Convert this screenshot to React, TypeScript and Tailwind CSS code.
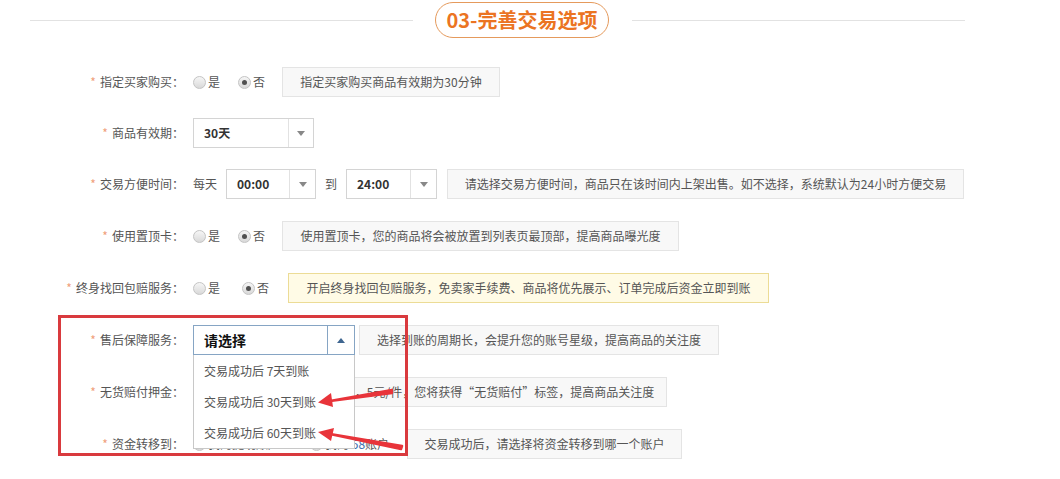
import type { ReactNode } from "react"

// ── small building blocks ─────────────────────────────────────────────────────
function Label({ text }: { text: string }) {
  return (
    <div className="w-[184px] shrink-0 text-right text-[12px] text-[#555]">
      <span className="mr-[4px] text-[#f0a07c]">*</span>
      {text}：
    </div>
  )
}

function Radio({ label, checked }: { label: string; checked?: boolean }) {
  return (
    <span className="inline-flex items-center text-[12px] text-[#555]">
      <span className="flex h-[13px] w-[13px] items-center justify-center rounded-full border border-[#c4c4c4] bg-gradient-to-b from-[#f6f6f6] to-[#d9d9d9]">
        {checked && <span className="h-[5px] w-[5px] rounded-full bg-[#505050]" />}
      </span>
      <span className="ml-[2px]">{label}</span>
    </span>
  )
}

function Hint({ children, w, warn }: { children: ReactNode; w: string; warn?: boolean }) {
  return (
    <div
      className={`flex h-[30px] shrink-0 items-center justify-center border text-[12px] text-[#555] ${w} ${
        warn ? "border-[#ecdc96] bg-[#fffbe6]" : "border-[#e4e4e4] bg-[#f8f8f8]"
      }`}
    >
      {children}
    </div>
  )
}

function Caret({ up }: { up?: boolean }) {
  return (
    <svg width="8" height="5" viewBox="0 0 8 5">
      {up ? <path d="M0 5 L4 0 L8 5 Z" fill="#3f6690" /> : <path d="M0 0 L8 0 L4 5 Z" fill="#888" />}
    </svg>
  )
}

function Select({ value, w, arrow }: { value: string; w: string; arrow: string }) {
  return (
    <div className={`flex h-[30px] shrink-0 border border-[#d4d4d4] bg-white ${w}`}>
      <div className="flex flex-1 items-center pl-[10px] text-[12px] font-bold text-[#333]">{value}</div>
      <div className={`flex items-center justify-center border-l border-[#e2e2e2] ${arrow}`}>
        <Caret />
      </div>
    </div>
  )
}

function Row({ mt, children }: { mt: string; children: ReactNode }) {
  return <div className={`flex h-[30px] items-center ${mt}`}>{children}</div>
}

const afterSaleOptions = ["交易成功后 7天到账", "交易成功后 30天到账", "交易成功后 60天到账"]

export default function App() {
  return (
    <div
      className="relative h-[479px] w-[1060px] overflow-hidden bg-white"
      style={{ fontFamily: '"Noto Sans CJK SC", "Noto Sans", sans-serif' }}
    >
      {/* section title */}
      <div className="mt-[2px] flex h-[36px] items-center">
        <div className="ml-[30px] h-px w-[383px] bg-[#e2e2e2]" />
        <div className="ml-[22px] flex h-[36px] w-[174px] items-center justify-center rounded-full border border-[#e59a5c] text-[20px] font-bold text-[#eb7422]">
          03-完善交易选项
        </div>
        <div className="ml-[23px] h-px w-[333px] bg-[#e2e2e2]" />
      </div>

      {/* form rows */}
      <div className="flex flex-col">
        <Row mt="mt-[29px]">
          <Label text="指定买家购买" />
          <div className="ml-[9px] flex items-center gap-[18px]">
            <Radio label="是" />
            <Radio label="否" checked />
          </div>
          <div className="ml-[17px]">
            <Hint w="w-[218px]">指定买家购买商品有效期为30分钟</Hint>
          </div>
        </Row>

        <Row mt="mt-[21px]">
          <Label text="商品有效期" />
          <div className="ml-[9px]">
            <Select value="30天" w="w-[121px]" arrow="w-[25px]" />
          </div>
        </Row>

        <Row mt="mt-[21px]">
          <Label text="交易方便时间" />
          <span className="ml-[9px] text-[12px] text-[#555]">每天</span>
          <div className="ml-[9px]">
            <Select value="00:00" w="w-[90px]" arrow="w-[26px]" />
          </div>
          <span className="ml-[9px] text-[12px] text-[#555]">到</span>
          <div className="ml-[9px]">
            <Select value="24:00" w="w-[91px]" arrow="w-[26px]" />
          </div>
          <div className="ml-[10px]">
            <Hint w="w-[517px]">请选择交易方便时间，商品只在该时间内上架出售。如不选择，系统默认为24小时方便交易</Hint>
          </div>
        </Row>

        <Row mt="mt-[22px]">
          <Label text="使用置顶卡" />
          <div className="ml-[9px] flex items-center gap-[18px]">
            <Radio label="是" />
            <Radio label="否" checked />
          </div>
          <div className="ml-[17px]">
            <Hint w="w-[397px]">使用置顶卡，您的商品将会被放置到列表页最顶部，提高商品曝光度</Hint>
          </div>
        </Row>

        <Row mt="mt-[22px]">
          <Label text="终身找回包赔服务" />
          <div className="ml-[9px] flex items-center gap-[22px]">
            <Radio label="是" />
            <Radio label="否" checked />
          </div>
          <div className="ml-[19px]">
            <Hint w="w-[481px]" warn>
              开启终身找回包赔服务，免卖家手续费、商品将优先展示、订单完成后资金立即到账
            </Hint>
          </div>
        </Row>

        <Row mt="mt-[22px]">
          <Label text="售后保障服务" />
          <div className="relative z-10 ml-[9px]">
            <div className="flex h-[30px] w-[162px] border border-[#86a5c4] bg-white">
              <div className="flex flex-1 items-center pl-[10px] text-[14px] font-bold text-[#111]">请选择</div>
              <div className="flex w-[27px] items-center justify-center border-l border-[#86a5c4]">
                <Caret up />
              </div>
            </div>
            <ul className="absolute left-0 top-full w-[162px] border border-t-0 border-[#c8c8c8] bg-white">
              {afterSaleOptions.map((opt) => (
                <li key={opt} className="flex h-[31px] items-center pl-[10px] text-[12px] text-[#555]">
                  {opt}
                </li>
              ))}
            </ul>
          </div>
          <div className="ml-[4px]">
            <Hint w="w-[360px]">选择到账的周期长，会提升您的账号星级，提高商品的关注度</Hint>
          </div>
        </Row>

        <Row mt="mt-[22px]">
          <Label text="无货赔付押金" />
          <div className="ml-[9px] flex items-center gap-[18px]">
            <Radio label="是" />
            <Radio label="否" checked />
          </div>
          <div className="ml-[17px]">
            <Hint w="w-[385px]">需缴纳押金，5元/件，您将获得“无货赔付”标签，提高商品关注度</Hint>
          </div>
        </Row>

        <Row mt="mt-[22px]">
          <Label text="资金转移到" />
          <div className="ml-[9px] flex items-center gap-[30px]">
            <Radio label="我的提现账户" checked />
            <span className="inline-flex items-center text-[12px] text-[#555]">
              <span className="h-[13px] w-[13px] rounded-full border border-[#c4c4c4] bg-gradient-to-b from-[#f6f6f6] to-[#d9d9d9]" />
              <span className="ml-[2px]">
                我的 <span className="text-[#3d6fb0]">58</span>账户
              </span>
            </span>
          </div>
          <div className="ml-[18px]">
            <Hint w="w-[275px]">交易成功后，请选择将资金转移到哪一个账户</Hint>
          </div>
        </Row>
      </div>

      {/* red annotation frame */}
      <div className="pointer-events-none absolute left-[58px] top-[315px] z-20 h-[141px] w-[350px] border-[3px] border-[#d93a3e]" />

      {/* red arrows pointing at the options */}
      <svg className="pointer-events-none absolute left-0 top-0 z-30" width="1060" height="479">
        <path d="M330 401 L392 390 L392 393 Z" fill="#e8343a" stroke="#e8343a" strokeWidth="2.5" strokeLinejoin="round" />
        <path d="M318 402.5 L333 407 L331 393 Z" fill="#e8343a" />
        <path d="M330 434 L401 449 L402 446 Z" fill="#e8343a" stroke="#e8343a" strokeWidth="2.5" strokeLinejoin="round" />
        <path d="M318 432 L331 441 L334 428 Z" fill="#e8343a" />
      </svg>
    </div>
  )
}
